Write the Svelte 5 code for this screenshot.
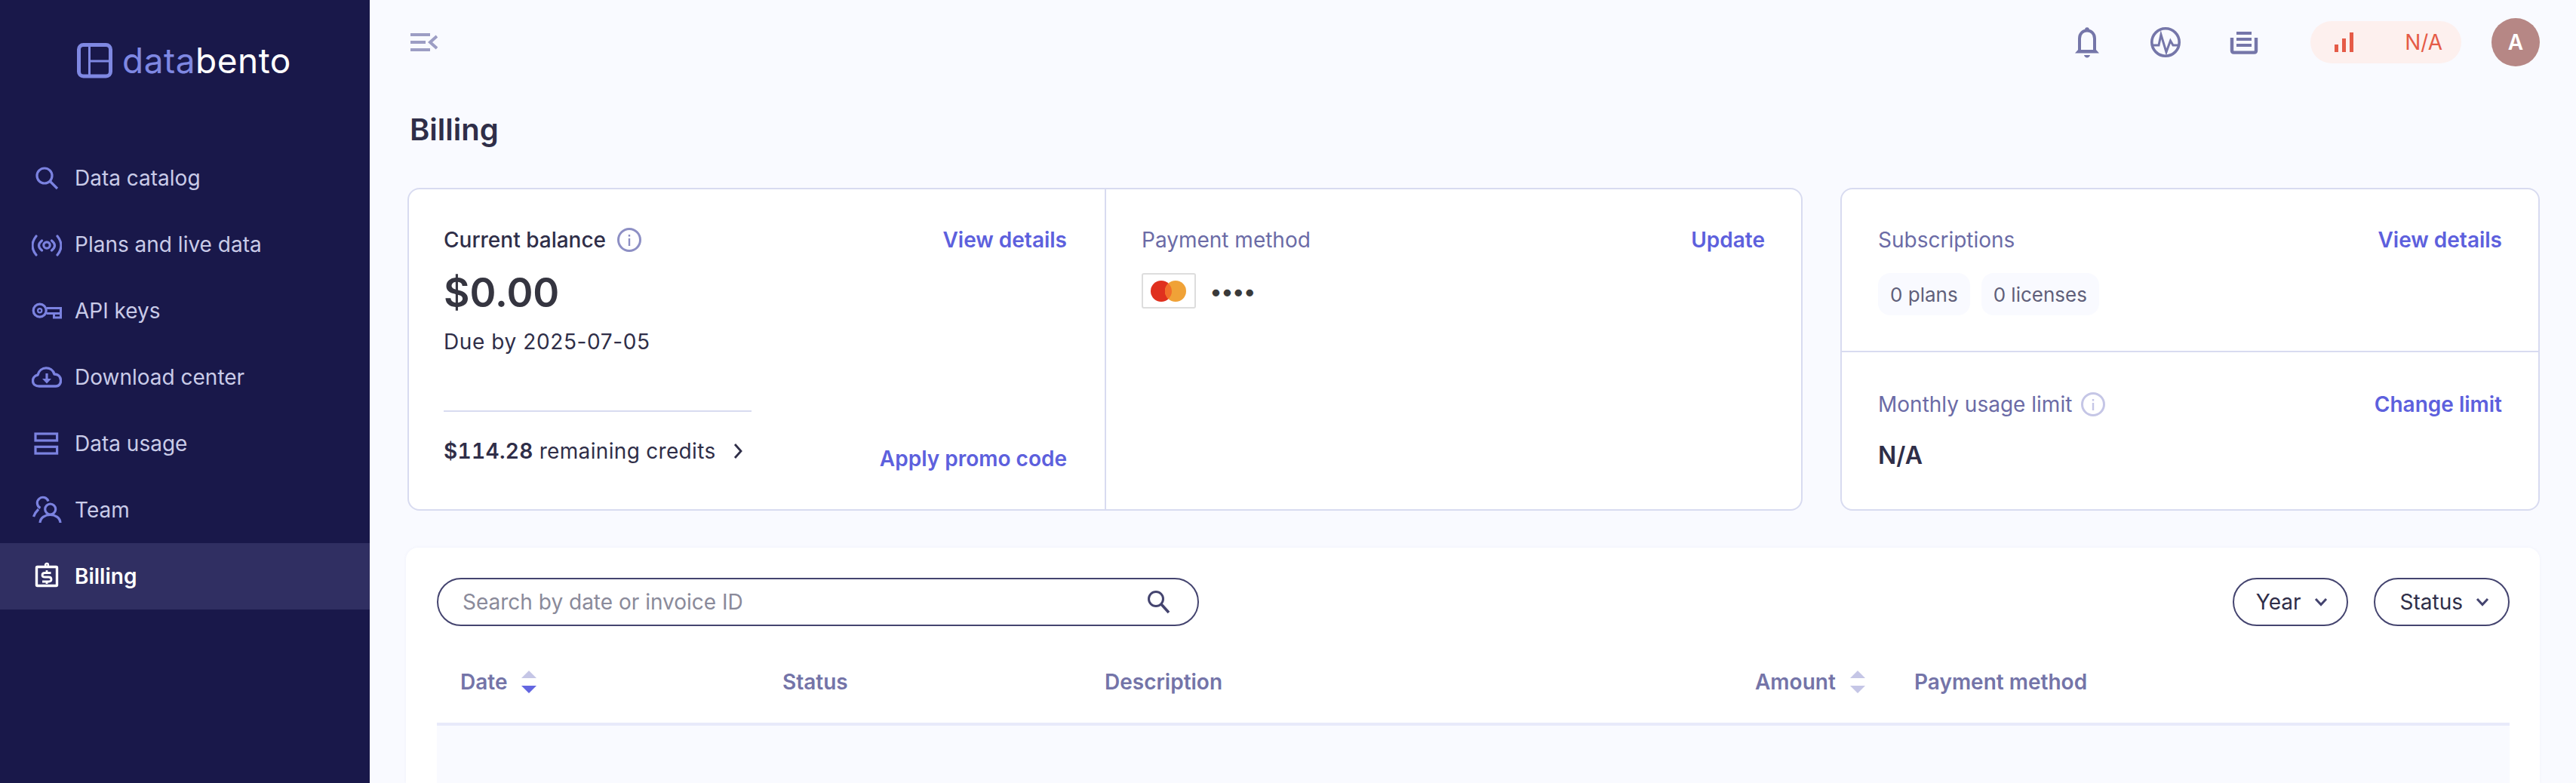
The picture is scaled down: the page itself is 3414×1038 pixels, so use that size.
<script>
  const nav = [
    { label: 'Data catalog', icon: 'search' },
    { label: 'Plans and live data', icon: 'live' },
    { label: 'API keys', icon: 'key' },
    { label: 'Download center', icon: 'cloud' },
    { label: 'Data usage', icon: 'usage' },
    { label: 'Team', icon: 'team' },
    { label: 'Billing', icon: 'billing', active: true }
  ];
</script>

{#snippet info(light)}
  <svg class="info" class:light width="32" height="32" viewBox="0 0 32 32">
    <circle cx="16" cy="16" r="14.5" fill="none" stroke="currentColor" stroke-width="3" />
    <rect x="14.8" y="14" width="2.4" height="10" fill="currentColor" />
    <rect x="14.8" y="9" width="2.4" height="2.6" fill="currentColor" />
  </svg>
{/snippet}

{#snippet sort(activeDown)}
  <svg class="sort" width="20" height="30" viewBox="0 0 20 30">
    <path d="M10 0 L20 10 H0 Z" fill="#c5c6e6" />
    <path d="M0 20 H20 L10 30 Z" fill={activeDown ? '#6366e0' : '#c5c6e6'} />
  </svg>
{/snippet}

{#snippet chevron()}
  <svg width="20" height="12" viewBox="0 0 20 12">
    <path d="M3 2 L10 9.5 L17 2" fill="none" stroke="#44446f" stroke-width="3" />
  </svg>
{/snippet}

<div class="layout">
  <aside class="sidebar">
    <div class="logo">
      <svg width="48" height="47" viewBox="0 0 48 47">
        <rect x="2.5" y="2.5" width="42" height="41.5" rx="6" fill="none" stroke="#7f88e2" stroke-width="5" />
        <path d="M16.5 3 V44 M17 24 H44" stroke="#7f88e2" stroke-width="3" />
      </svg>
      <span class="logo-text"><span class="data">data</span>bento</span>
    </div>
    <nav>
      {#each nav as item}
        <a class="nav-item" class:active={item.active} href="#top">
          <svg class="nav-icon" width="40" height="40" viewBox="0 0 40 40" fill="none" stroke="currentColor" stroke-width="3.2">
            {#if item.icon === 'search'}
              <circle cx="17" cy="17" r="10" />
              <path d="M24.5 24.5 L34 34" />
            {:else if item.icon === 'live'}
              <circle cx="20" cy="21" r="4.2" />
              <path d="M6 9 Q-4 21.5 6 34 M13.5 15 Q5.5 21.5 13.5 28 M34 9 Q44 21.5 34 34 M26.5 15 Q34.5 21.5 26.5 28" stroke-linecap="round" />
            {:else if item.icon === 'key'}
              <circle cx="10.7" cy="19.7" r="8.5" />
              <circle cx="10.7" cy="19.7" r="2.6" stroke-width="2.2" />
              <path d="M20 16.5 H38.5 V23.5 H20 M29.5 23.5 V29 H38.5 V23.5" stroke-width="3" />
            {:else if item.icon === 'cloud'}
              <path d="M10 32 C-1 32 -1 19 8 17 C11 5 27 5 30 16 C41 16 41 32 32 32 Z" stroke-linejoin="round" stroke-width="3.4" />
              <path d="M20 15 V24" />
              <path d="M14 22 H26 L20 28.5 Z" fill="currentColor" stroke="none" />
            {:else if item.icon === 'usage'}
              <rect x="5" y="7" width="28.6" height="9" />
              <rect x="5" y="24.3" width="28.6" height="8.8" />
            {:else if item.icon === 'team'}
              <circle cx="24.7" cy="19" r="7" />
              <path d="M11 37 C12 23 37 23 38 37" />
              <path d="M11.5 17.5 A7.5 7.5 0 1 1 22 8.5 M9 19 Q4 24 2.5 29" />
            {:else if item.icon === 'billing'}
              <rect x="6.5" y="7.5" width="27" height="25" rx="1" stroke-width="3.4" />
              <circle cx="20" cy="5" r="2" stroke-width="2.4" />
              <path d="M25.5 15.5 H17.5 Q14 15.5 14 18.5 Q14 21 17.5 21 H22.5 Q26 21 26 24 Q26 27 22.5 27 H14 M20 12 V15 M20 27 V30" stroke-width="2.8" />
            {/if}
          </svg>
          <span>{item.label}</span>
        </a>
      {/each}
    </nav>
  </aside>

  <main class="main">
    <header class="topbar">
      <svg class="toggle" width="36" height="24" viewBox="0 0 36 24" fill="none" stroke="#9c9dc4" stroke-width="4">
        <path d="M0 2 H26 M0 12 H20 M0 22 H26" />
        <path d="M35 4 L26 12 L35 20" />
      </svg>
      <div class="top-actions">
        <svg class="top-icon" width="44" height="44" viewBox="0 0 44 44" fill="none" stroke="#7576a9" stroke-width="4">
          <path d="M12 33 V17 C12 3 32 3 32 17 V33" />
          <circle cx="22" cy="5" r="2.8" fill="#7576a9" stroke="none" />
          <path d="M6 36.5 L10 32 H34 L38 36.5 Z" fill="#7576a9" stroke="none" />
          <path d="M18 39 H26 C25 43.5 19 43.5 18 39 Z" fill="#7576a9" stroke="none" />
        </svg>
        <svg class="top-icon" width="44" height="44" viewBox="0 0 44 44" fill="none" stroke="#7576a9" stroke-width="3.6">
          <circle cx="22" cy="22" r="18.2" />
          <path d="M5 26 H13 L16 12 L23 35 L28.5 20 L32 26 H39" stroke-width="3" />
        </svg>
        <svg class="top-icon" width="44" height="44" viewBox="0 0 44 44" fill="none" stroke="#7576a9" stroke-width="4">
          <path d="M12 10 H32 M12 18 H32 M12 26 H32" />
          <path d="M6 16 V33 Q6 35.6 8.5 35.6 H35.5 Q38 35.6 38 33 V16" stroke-width="4.4" />
        </svg>
        <div class="status-pill">
          <svg width="26" height="26" viewBox="0 0 26 26" fill="#e55b47">
            <rect x="0" y="16" width="5" height="10" />
            <rect x="10" y="8" width="5" height="18" />
            <rect x="20" y="0" width="5" height="26" />
          </svg>
          <span>N/A</span>
        </div>
        <div class="avatar">A</div>
      </div>
    </header>

    <h1>Billing</h1>

    <section class="cards">
      <div class="card balance-card">
        <div class="col balance">
          <div class="head">
            <div class="title strong">Current balance {@render info(false)}</div>
            <a class="link" href="#top">View details</a>
          </div>
          <div class="amount">$0.00</div>
          <div class="due">Due by 2025-07-05</div>
          <div class="bottom">
            <div class="credits">
              <span><b>$114.28</b> remaining credits</span>
              <svg width="12" height="20" viewBox="0 0 12 20">
                <path d="M2 1 L10 10 L2 19" fill="none" stroke="#2f2e48" stroke-width="2.8" />
              </svg>
            </div>
            <a class="link" href="#top">Apply promo code</a>
          </div>
        </div>
        <div class="col payment">
          <div class="head">
            <div class="title">Payment method</div>
            <a class="link" href="#top">Update</a>
          </div>
          <div class="method">
            <div class="brand">
              <svg width="48" height="28" viewBox="0 0 48 28">
                <circle cx="14" cy="14" r="14" fill="#e0301e" />
                <circle cx="33" cy="14" r="14" fill="#f0a237" />
                <path d="M23.5 3.7 A14 14 0 0 1 23.5 24.3 A14 14 0 0 1 23.5 3.7 Z" fill="#f26e2a" />
              </svg>
            </div>
            <span class="dots">••••</span>
          </div>
        </div>
      </div>

      <div class="card side-card">
        <div class="side-top">
          <div class="head">
            <div class="title">Subscriptions</div>
            <a class="link" href="#top">View details</a>
          </div>
          <div class="chips">
            <span class="chip">0 plans</span>
            <span class="chip">0 licenses</span>
          </div>
        </div>
        <div class="side-bottom">
          <div class="head">
            <div class="title">Monthly usage limit {@render info(true)}</div>
            <a class="link" href="#top">Change limit</a>
          </div>
          <div class="limit">N/A</div>
        </div>
      </div>
    </section>

    <section class="table-card">
      <div class="toolbar">
        <div class="search">
          <input type="text" placeholder="Search by date or invoice ID" />
          <svg width="32" height="32" viewBox="0 0 32 32" fill="none" stroke="#44446f" stroke-width="3">
            <circle cx="13" cy="12" r="9.5" />
            <path d="M20 19 L30 30" stroke-width="3.6" />
          </svg>
        </div>
        <div class="filters">
          <button class="filter">Year {@render chevron()}</button>
          <button class="filter">Status {@render chevron()}</button>
        </div>
      </div>
      <div class="thead">
        <div class="th">Date {@render sort(true)}</div>
        <div class="th">Status</div>
        <div class="th">Description</div>
        <div class="th">Amount {@render sort(false)}</div>
        <div class="th">Payment method</div>
      </div>
      <div class="tbody"></div>
    </section>
  </main>
</div>

<style>
  :global(body) {
    margin: 0;
    font-family: Inter, "Noto Sans", sans-serif;
    font-size: 28px;
    color: #2f2e48;
    background: #f9faff;
  }
  .layout {
    display: flex;
    height: 100vh;
    overflow: hidden;
  }

  .sidebar {
    width: 490px;
    flex-shrink: 0;
    background: #19184a;
  }
  .logo {
    display: flex;
    align-items: center;
    gap: 12px;
    padding: 57px 0 0 102px;
    height: 47px;
  }
  .logo-text {
    font-size: 46px;
    font-weight: 400;
    letter-spacing: 0.5px;
    color: #fff;
    line-height: 47px;
  }
  .data {
    color: #7f88e2;
  }
  nav {
    margin-top: 88px;
  }
  .nav-item {
    display: flex;
    align-items: center;
    gap: 17px;
    height: 88px;
    padding-left: 42px;
    color: #c9cbe8;
    text-decoration: none;
  }
  .nav-icon {
    color: #7b82e0;
    flex-shrink: 0;
  }
  .nav-item.active {
    background: #302f62;
    color: #fff;
    font-weight: 600;
  }
  .nav-item.active .nav-icon {
    color: #fff;
  }

  .main {
    flex: 1;
    display: flex;
    flex-direction: column;
    padding: 24px 48px 0 50px;
    min-width: 0;
  }
  .topbar {
    display: flex;
    align-items: center;
    justify-content: space-between;
    height: 64px;
  }
  .toggle {
    margin-left: 4px;
  }
  .top-actions {
    display: flex;
    align-items: center;
  }
  .top-icon {
    margin-right: 60px;
  }
  .top-icon:nth-child(3) {
    margin-right: 66px;
  }
  .status-pill {
    display: flex;
    align-items: center;
    justify-content: space-between;
    box-sizing: border-box;
    width: 200px;
    height: 56px;
    padding: 0 25px 0 32px;
    margin-right: 40px;
    border-radius: 28px;
    background: #fdf0ee;
    color: #e55b47;
  }
  .avatar {
    display: flex;
    align-items: center;
    justify-content: center;
    width: 64px;
    height: 64px;
    border-radius: 50%;
    background: #b68785;
    color: #fff;
    font-size: 28px;
    font-weight: 600;
  }

  h1 {
    margin: 60px 0 0 0;
    padding-left: 3px;
    font-size: 40px;
    line-height: 48px;
    font-weight: 600;
  }

  .cards {
    display: grid;
    grid-template-columns: 1fr 927px;
    gap: 50px;
    margin-top: 53px;
  }
  .card {
    box-sizing: border-box;
    height: 428px;
    background: #fff;
    border: 2px solid #d8dbf0;
    border-radius: 16px;
  }
  .balance-card {
    display: grid;
    grid-template-columns: 922px 1fr;
  }
  .col {
    display: flex;
    flex-direction: column;
    padding-top: 47px;
  }
  .balance {
    padding: 47px 50px 0 46px;
  }
  .payment {
    border-left: 2px solid #d8dbf0;
    padding: 47px 48px 0 47px;
  }
  .head {
    display: flex;
    align-items: center;
    justify-content: space-between;
    height: 40px;
  }
  .title {
    display: flex;
    align-items: center;
    gap: 12px;
    color: #6b6ba6;
  }
  .title.strong {
    color: #2f2e48;
    font-weight: 500;
    gap: 15px;
  }
  .info {
    color: #8d8fc4;
  }
  .info.light {
    color: #c5c6e6;
  }
  .link {
    color: #5d60dd;
    font-weight: 600;
    text-decoration: none;
  }
  .amount {
    margin-top: 18px;
    font-size: 53px;
    line-height: 64px;
    font-weight: 600;
    color: #353540;
  }
  .due {
    margin-top: 13px;
    line-height: 40px;
    letter-spacing: 0.6px;
  }
  .bottom {
    display: flex;
    align-items: flex-end;
    justify-content: space-between;
    margin-top: 71px;
    line-height: 40px;
  }
  .credits {
    display: flex;
    align-items: center;
    justify-content: space-between;
    box-sizing: border-box;
    width: 408px;
    border-top: 2px solid #d8dbf0;
    padding: 32px 12px 10px 0;
    font-variant-numeric: tabular-nums;
    letter-spacing: 0.35px;
  }
  .credits b {
    font-weight: 600;
  }
  .method {
    display: flex;
    align-items: center;
    gap: 18px;
    margin-top: 24px;
  }
  .brand {
    display: flex;
    align-items: center;
    justify-content: center;
    box-sizing: border-box;
    width: 72px;
    height: 47px;
    border: 2px solid #ddd;
    border-radius: 3px;
  }
  .dots {
    font-size: 30px;
    letter-spacing: -2px;
    color: #3a3a3a;
  }

  .side-top {
    box-sizing: border-box;
    height: 216px;
    padding: 47px 48px 0 48px;
    border-bottom: 2px solid #d8dbf0;
  }
  .side-bottom {
    padding: 49px 48px 0 48px;
  }
  .chips {
    display: flex;
    gap: 15px;
    margin-top: 24px;
  }
  .chip {
    display: flex;
    align-items: center;
    height: 56px;
    padding: 0 16px;
    border-radius: 16px;
    background: #f9faff;
    color: #60607a;
    font-size: 26px;
  }
  .limit {
    margin-top: 28px;
    font-size: 32px;
    line-height: 40px;
    font-weight: 600;
  }

  .table-card {
    flex: 1;
    display: flex;
    flex-direction: column;
    margin: 49px 0 0 -2px;
    padding: 40px 40px 0 41px;
    background: #fff;
    border-radius: 16px 16px 0 0;
    box-shadow: 0 0 4px rgba(80, 80, 160, 0.05);
  }
  .toolbar {
    display: flex;
    justify-content: space-between;
  }
  .search {
    display: flex;
    align-items: center;
    box-sizing: border-box;
    width: 1010px;
    height: 64px;
    padding: 0 36px 0 32px;
    border: 2px solid #44446f;
    border-radius: 32px;
  }
  .search input {
    flex: 1;
    min-width: 0;
    border: 0;
    outline: 0;
    padding: 0;
    background: none;
    font: inherit;
  }
  .search input::placeholder {
    color: #8a8a9a;
    opacity: 1;
  }
  .filters {
    display: flex;
    gap: 34px;
  }
  .filter {
    display: flex;
    align-items: center;
    gap: 16px;
    box-sizing: border-box;
    height: 64px;
    padding: 0 24px 0 33px;
    border: 2px solid #44446f;
    border-radius: 32px;
    background: #fff;
    font: inherit;
    color: #2f2e48;
  }
  .filter:first-child {
    padding-left: 29px;
  }
  .thead {
    display: grid;
    grid-template-columns: 427px 427px 862px 211px 1fr;
    align-items: center;
    height: 108px;
    margin-top: 20px;
    padding-left: 31px;
    border-bottom: 4px solid #e8eafa;
  }
  .th {
    display: flex;
    align-items: center;
    gap: 19px;
    color: #7474a8;
    font-weight: 600;
  }
  .tbody {
    flex: 1;
    background: #f9faff;
  }
</style>
